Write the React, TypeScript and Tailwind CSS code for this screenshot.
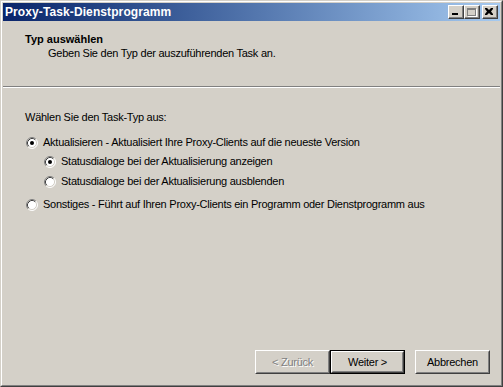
import React from 'react';

const font = { fontFamily: '"Liberation Sans", Arial, sans-serif' };

function Radio({ checked }: { checked?: boolean }) {
  return (
    <svg width="12" height="12" viewBox="0 0 12 12" className="shrink-0">
      <circle cx="6" cy="6" r="5" fill="#ffffff" />
      <path d="M2.11 9.89 A5.5 5.5 0 0 1 9.89 2.11" fill="none" stroke="#808080" strokeWidth="1" />
      <path d="M9.89 2.11 A5.5 5.5 0 0 1 2.11 9.89" fill="none" stroke="#ffffff" strokeWidth="1" />
      <path d="M2.82 9.18 A4.5 4.5 0 0 1 9.18 2.82" fill="none" stroke="#404040" strokeWidth="1" />
      <path d="M9.18 2.82 A4.5 4.5 0 0 1 2.82 9.18" fill="none" stroke="#d4d0c8" strokeWidth="1" />
      {checked && <circle cx="6" cy="6" r="2" fill="#000000" />}
    </svg>
  );
}

function Button({ label, isDefault, disabled }: { label: string; isDefault?: boolean; disabled?: boolean }) {
  const face = (
    <div className="h-full border border-t-white border-l-white border-r-[#404040] border-b-[#404040]">
      <div className="h-full border border-t-[#d4d0c8] border-l-[#d4d0c8] border-r-[#808080] border-b-[#808080] flex items-center justify-center">
        {disabled ? (
          <span className="text-[#808080] [text-shadow:1px_1px_0_#ffffff]">{label}</span>
        ) : (
          <span className="text-black">{label}</span>
        )}
      </div>
    </div>
  );
  return (
    <div className={`w-[75px] h-[24px] ${isDefault ? 'border border-black' : ''}`}>
      {face}
    </div>
  );
}

function CaptionButton({ children }: { children: React.ReactNode }) {
  return (
    <div className="w-[16px] h-[14px] bg-[#d4d0c8] border border-t-white border-l-white border-r-[#404040] border-b-[#404040]">
      <div className="w-full h-full border-r border-b border-[#808080] flex items-center justify-center">
        {children}
      </div>
    </div>
  );
}

export default function App() {
  return (
    <div
      className="w-[503px] h-[387px] bg-[#d4d0c8] border border-t-[#d4d0c8] border-l-[#d4d0c8] border-r-[#404040] border-b-[#404040] text-[11px] text-black"
      style={font}
    >
      <div className="h-full border border-t-white border-l-white border-r-[#808080] border-b-[#808080] p-px flex flex-col">
        {/* Title bar */}
        <div className="h-[18px] flex items-center pl-[2px] pr-[2px] bg-gradient-to-r from-[#0a246a] to-[#a6caf0]">
          <span className="text-white font-bold text-[12px] leading-none tracking-[0.1px]">Proxy-Task-Dienstprogramm</span>
          <div className="ml-auto flex items-center">
            <CaptionButton>
              <div className="w-[6px] h-[2px] bg-black mt-[5px] -ml-[1px]" />
            </CaptionButton>
            <CaptionButton>
              <div className="w-[9px] h-[8px] border border-t-2 border-[#808080] [box-shadow:1px_1px_0_#ffffff] -ml-[1px]" />
            </CaptionButton>
            <div className="ml-[2px]">
              <CaptionButton>
                <svg width="8" height="7" viewBox="0 0 8 7" className="-ml-[1px]">
                  <path d="M0 0h2l2 2 2-2h2v1L6 3.5 8 6v1H6L4 5 2 7H0V6l2-2.5L0 1z" fill="#000" />
                </svg>
              </CaptionButton>
            </div>
          </div>
        </div>

        <div className="flex-1 flex flex-col tracking-[-0.25px]">
          {/* Header */}
          <div className="h-[65px] pt-[12px] pl-[22px]">
            <div className="font-bold leading-[13px] tracking-[0px]">Typ auswählen</div>
            <div className="pl-[23px] leading-[13px] mt-[1px]">Geben Sie den Typ der auszuführenden Task an.</div>
          </div>
          <div className="border-t border-t-[#808080] border-b border-b-white" />

          {/* Body */}
          <div className="flex-1 pl-[22px] pt-[23px]">
            <div className="leading-[13px]">Wählen Sie den Task-Typ aus:</div>
            <div className="mt-[12px] flex flex-col">
              <label className="flex items-center gap-[5px] h-[13px] pl-[1px]">
                <Radio checked />
                <span>Aktualisieren - Aktualisiert Ihre Proxy-Clients auf die neueste Version</span>
              </label>
              <div className="pl-[19px] mt-[6px] flex flex-col gap-[7px]">
                <label className="flex items-center gap-[5px] h-[13px]">
                  <Radio checked />
                  <span>Statusdialoge bei der Aktualisierung anzeigen</span>
                </label>
                <label className="flex items-center gap-[5px] h-[13px]">
                  <Radio />
                  <span>Statusdialoge bei der Aktualisierung ausblenden</span>
                </label>
              </div>
              <label className="flex items-center gap-[5px] h-[13px] pl-[1px] mt-[10px]">
                <Radio />
                <span>Sonstiges - Führt auf Ihren Proxy-Clients ein Programm oder Dienstprogramm aus</span>
              </label>
            </div>
          </div>

          {/* Footer buttons */}
          <div className="flex justify-end pr-[10px] pb-[10px]">
            <Button label="< Zurück" disabled />
            <Button label="Weiter >" isDefault />
            <div className="ml-[10px]">
              <Button label="Abbrechen" />
            </div>
          </div>
        </div>
      </div>
    </div>
  );
}
